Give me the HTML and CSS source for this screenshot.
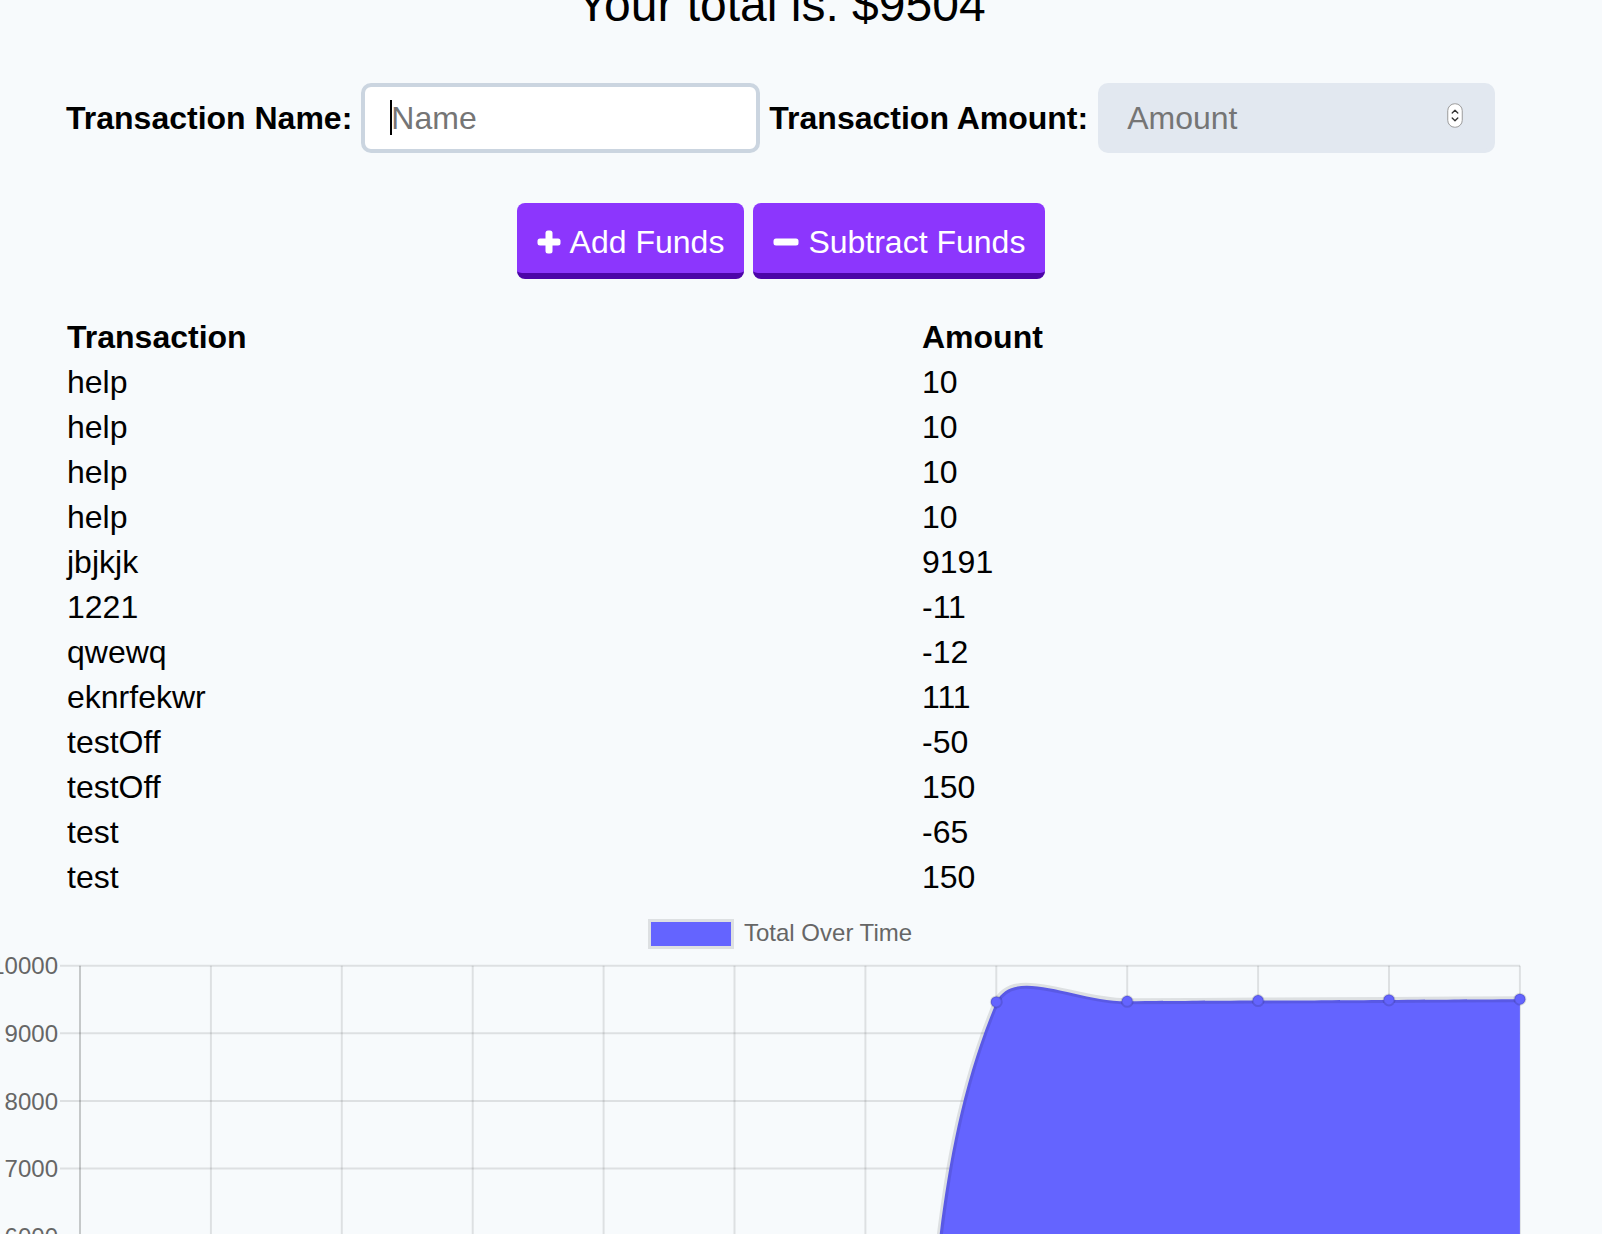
FILE: index.html
```html
<!DOCTYPE html>
<html lang="en">
<head>
<meta charset="utf-8">
<title>Budget Tracker</title>
<link rel="stylesheet" href="styles.css">
</head>
<body>
<div class="page">
  <h1 class="total">Your total is: $9504</h1>
  <form class="form-row">
    <label class="field-label label-name" for="t-name">Transaction Name:</label>
    <span class="field name-field">
      <input id="t-name" class="input input-name" type="text" placeholder="Name">
      <span class="caret"></span>
    </span>
    <label class="field-label label-amount" for="t-amount">Transaction Amount:</label>
    <span class="field amount-field">
      <input id="t-amount" class="input input-amount" type="number" placeholder="Amount">
      <svg class="spinner" viewBox="0 0 16 25" width="16" height="25">
        <rect x="0.75" y="0.75" width="14.5" height="23.5" rx="7" fill="#fff" stroke="#9a9a9a" stroke-width="1"/>
        <polyline points="5.2,10 8,7.2 10.8,10" fill="none" stroke="#333" stroke-width="1.3" stroke-linecap="round" stroke-linejoin="round"/>
        <polyline points="5.2,15 8,17.8 10.8,15" fill="none" stroke="#333" stroke-width="1.3" stroke-linecap="round" stroke-linejoin="round"/>
      </svg>
    </span>
  </form>
  <div class="actions">
    <button class="btn" type="button">
      <svg class="btn-icon icon-plus" viewBox="0 0 24 24" width="24" height="24">
        <rect x="8.5" y="0.5" width="7" height="23" rx="2.5" fill="#fff"/>
        <rect x="0.5" y="8.5" width="23" height="7" rx="2.5" fill="#fff"/>
      </svg>
      <span>Add Funds</span>
    </button>
    <button class="btn" type="button">
      <svg class="btn-icon icon-minus" viewBox="0 0 26 24" width="26" height="24">
        <rect x="0.5" y="8.5" width="25" height="7" rx="2.5" fill="#fff"/>
      </svg>
      <span>Subtract Funds</span>
    </button>
  </div>
  <table class="ledger">
    <thead>
      <tr><th class="col-name">Transaction</th><th>Amount</th></tr>
    </thead>
    <tbody>
      <tr><td>help</td><td>10</td></tr>
      <tr><td>help</td><td>10</td></tr>
      <tr><td>help</td><td>10</td></tr>
      <tr><td>help</td><td>10</td></tr>
      <tr><td>jbjkjk</td><td>9191</td></tr>
      <tr><td>1221</td><td>-11</td></tr>
      <tr><td>qwewq</td><td>-12</td></tr>
      <tr><td>eknrfekwr</td><td>111</td></tr>
      <tr><td>testOff</td><td>-50</td></tr>
      <tr><td>testOff</td><td>150</td></tr>
      <tr><td>test</td><td>-65</td></tr>
      <tr><td>test</td><td>150</td></tr>
    </tbody>
  </table>
</div>
<svg class="chart" width="1602" height="332" viewBox="0 902 1602 332">
  <!-- legend -->
  <rect x="651" y="922" width="80" height="24" fill="#6464ff"/>
  <rect x="649.5" y="920.5" width="83" height="27" fill="none" stroke="rgba(0,0,0,0.1)" stroke-width="3"/>
  <text class="legend-text" x="744" y="941">Total Over Time</text>

  <!-- y tick labels -->
  <text class="tick" x="58" y="974.3">10000</text>
  <text class="tick" x="58" y="1041.9">9000</text>
  <text class="tick" x="58" y="1109.5">8000</text>
  <text class="tick" x="58" y="1177.1">7000</text>
  <text class="tick" x="58" y="1244.7">6000</text>

  <!-- horizontal grid -->
  <g stroke="rgba(0,0,0,0.1)" stroke-width="2">
    <line x1="60" y1="965.7" x2="1520" y2="965.7"/>
    <line x1="60" y1="1033.3" x2="1520" y2="1033.3"/>
    <line x1="60" y1="1100.9" x2="1520" y2="1100.9"/>
    <line x1="60" y1="1168.5" x2="1520" y2="1168.5"/>
    <line x1="60" y1="1236.1" x2="1520" y2="1236.1"/>
  </g>
  <!-- vertical grid -->
  <g stroke="rgba(0,0,0,0.1)" stroke-width="2">
    <line x1="210.9" y1="965.7" x2="210.9" y2="1700"/>
    <line x1="341.8" y1="965.7" x2="341.8" y2="1700"/>
    <line x1="472.7" y1="965.7" x2="472.7" y2="1700"/>
    <line x1="603.6" y1="965.7" x2="603.6" y2="1700"/>
    <line x1="734.5" y1="965.7" x2="734.5" y2="1700"/>
    <line x1="865.4" y1="965.7" x2="865.4" y2="1700"/>
    <line x1="996.3" y1="965.7" x2="996.3" y2="1700"/>
    <line x1="1127.2" y1="965.7" x2="1127.2" y2="1700"/>
    <line x1="1258.1" y1="965.7" x2="1258.1" y2="1700"/>
    <line x1="1389" y1="965.7" x2="1389" y2="1700"/>
    <line x1="1519.9" y1="965.7" x2="1519.9" y2="1700"/>
  </g>
  <line x1="80" y1="965.7" x2="80" y2="1700" stroke="rgba(0,0,0,0.2)" stroke-width="2"/>

  <!-- area -->
  <path fill="#6464ff" d="M80,1641.7 L80,1631.6 L210.9,1635.9 L341.8,1625.8 L472.7,1629.2 L603.6,1621.7 L734.5,1622.5 L865.4,1623.2 C952.2,1417.4 909.5,1208.1 996.3,1001.9 C1014.2,965.7 1074.8,1001.6 1127.2,1001.3 C1179.6,1001.0 1205.7,1000.9 1258.1,1000.6 C1310.5,1000.3 1336.6,1000.2 1389,999.9 C1441.4,999.6 1467.5,999.5 1519.9,999.2 L1519.9,1641.7 Z"/>
  <path fill="none" stroke="rgba(0,0,0,0.1)" stroke-width="6" stroke-linejoin="round" d="M80,1631.6 L210.9,1635.9 L341.8,1625.8 L472.7,1629.2 L603.6,1621.7 L734.5,1622.5 L865.4,1623.2 C952.2,1417.4 909.5,1208.1 996.3,1001.9 C1014.2,965.7 1074.8,1001.6 1127.2,1001.3 C1179.6,1001.0 1205.7,1000.9 1258.1,1000.6 C1310.5,1000.3 1336.6,1000.2 1389,999.9 C1441.4,999.6 1467.5,999.5 1519.9,999.2"/>

  <!-- points -->
  <g fill="#6464ff" stroke="rgba(0,0,0,0.12)" stroke-width="2">
    <circle cx="996.3" cy="1001.9" r="5.5"/>
    <circle cx="1127.2" cy="1001.3" r="5.5"/>
    <circle cx="1258.1" cy="1000.6" r="5.5"/>
    <circle cx="1389" cy="999.9" r="5.5"/>
    <circle cx="1519.9" cy="999.2" r="5.5"/>
  </g>
</svg>
</body>
</html>
```

FILE: styles.css
```css
html, body {
  margin: 0;
  padding: 0;
  background: #f7fafc;
  color: #000;
  font-family: "Liberation Sans", Arial, Helvetica, sans-serif;
}

.page {
  width: 1562px;
}

.total {
  margin: -23px 0 0;
  font-size: 48px;
  line-height: 55px;
  font-weight: 400;
  text-align: center;
}

.form-row {
  display: flex;
  align-items: center;
  height: 70px;
  margin: 51px 0 0;
  padding-left: 66px;
}

.field-label {
  font-size: 32px;
  line-height: 37px;
  font-weight: 700;
}

.label-name {
  margin-right: 9px;
}

.label-amount {
  margin-right: 10px;
}

.field {
  position: relative;
  display: block;
}

.name-field {
  margin-right: 9px;
}

.input {
  box-sizing: border-box;
  height: 70px;
  margin: 0;
  font-family: "Liberation Sans", Arial, Helvetica, sans-serif;
  font-size: 32px;
  color: #000;
  border-radius: 10px;
  outline: none;
}

.input::placeholder {
  color: #757575;
  opacity: 1;
}

.input-name {
  width: 399px;
  border: 4px solid #cbd5e0;
  background: #fff;
  padding: 0 0 0 26px;
}

.input-amount {
  width: 397px;
  border: 4px solid #e2e8f0;
  background: #e2e8f0;
  padding: 0 0 0 25px;
  -moz-appearance: textfield;
  appearance: textfield;
}

.input-amount::-webkit-inner-spin-button,
.input-amount::-webkit-outer-spin-button {
  -webkit-appearance: none;
  margin: 0;
}

.caret {
  position: absolute;
  left: 29px;
  top: 17px;
  width: 2px;
  height: 35px;
  background: #000;
}

.spinner {
  position: absolute;
  right: 32px;
  top: 20px;
  display: block;
}

.actions {
  display: flex;
  justify-content: center;
  gap: 9px;
  margin-top: 50px;
}

.btn {
  display: flex;
  align-items: center;
  gap: 9px;
  box-sizing: border-box;
  height: 76px;
  margin: 0;
  padding: 8px 20px 0;
  border: 0;
  border-bottom: 6px solid #4c05a8;
  border-radius: 8px;
  background: #8c36fd;
  color: #fff;
  font-family: "Liberation Sans", Arial, Helvetica, sans-serif;
  font-size: 32px;
  line-height: 37px;
  cursor: pointer;
}

.btn-icon {
  display: block;
  flex: none;
}

.ledger {
  margin: 34px 0 0 61px;
  border-spacing: 4px;
  font-size: 32px;
  line-height: 37px;
}

.ledger th,
.ledger td {
  padding: 2px;
  text-align: left;
  vertical-align: middle;
}

.ledger th {
  font-weight: 700;
}

.col-name {
  width: 847px;
}

.chart {
  display: block;
}

.chart text {
  font-family: "Liberation Sans", Arial, Helvetica, sans-serif;
  font-size: 24px;
  fill: #666;
}

.chart .tick {
  text-anchor: end;
}
```
